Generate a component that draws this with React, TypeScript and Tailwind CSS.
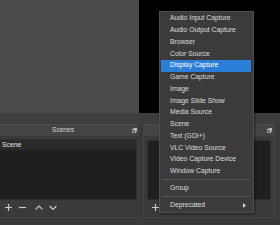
import React from 'react';

const ITEMS_TOP = [
  'Audio Input Capture',
  'Audio Output Capture',
  'Browser',
  'Color Source',
  'Display Capture',
  'Game Capture',
  'Image',
  'Image Slide Show',
  'Media Source',
  'Scene',
  'Text (GDI+)',
  'VLC Video Source',
  'Video Capture Device',
  'Window Capture',
];

function FloatIcon() {
  return (
    <svg width="5" height="5" viewBox="0 0 5 5" className="shrink-0">
      <rect x="1.5" y="0" width="3.5" height="3.5" fill="#bdbdbd" />
      <rect x="0" y="1.5" width="3.5" height="3.5" fill="#6a6a6a" stroke="#bdbdbd" strokeWidth="0.8" />
    </svg>
  );
}

function TitleBar({ title }: { title?: string }) {
  return (
    <div className="relative h-[12px] bg-[#444444] border-t border-[#4c4c4c] flex items-center justify-center pr-[13px]">
      {title && <span className="text-[6.6px] leading-none text-[#d8d8d8]">{title}</span>}
      <div className="absolute right-[2px] top-[3px]">
        <FloatIcon />
      </div>
    </div>
  );
}

function Toolbar({ full }: { full: boolean }) {
  const c = '#c9c9c9';
  return (
    <div className="h-[14px] flex items-center pl-[5px]">
      <svg width="7" height="7" viewBox="0 0 7 7">
        <path d="M3.5 0V7M0 3.5H7" stroke={c} strokeWidth="1.2" />
      </svg>
      {full && (
        <>
          <svg width="7" height="7" viewBox="0 0 7 7" className="ml-[7px]">
            <path d="M0 3.5H7" stroke={c} strokeWidth="1.2" />
          </svg>
          <svg width="8" height="7" viewBox="0 0 8 7" className="ml-[9px]">
            <path d="M0.6 5.4L4 2L7.4 5.4" stroke={c} strokeWidth="1.2" fill="none" />
          </svg>
          <svg width="8" height="7" viewBox="0 0 8 7" className="ml-[6px]">
            <path d="M0.6 2L4 5.4L7.4 2" stroke={c} strokeWidth="1.2" fill="none" />
          </svg>
        </>
      )}
    </div>
  );
}

function MenuItem({ label, active, arrow }: { label: string; active?: boolean; arrow?: boolean }) {
  return (
    <div
      className={`relative h-[11.75px] flex items-center pl-[9px] text-[6.8px] leading-none ${
        active ? 'bg-[#2b7fd8] text-white' : 'text-[#dedede]'
      }`}
    >
      {label}
      {arrow && (
        <svg width="3" height="5" viewBox="0 0 3 5" className="absolute right-[5px] top-[3.5px]">
          <path d="M0 0L3 2.5L0 5Z" fill="#d0d0d0" />
        </svg>
      )}
    </div>
  );
}

export default function App() {
  return (
    <div
      className="relative w-[280px] h-[225px] overflow-hidden bg-[#3a3a3a] select-none"
      style={{ fontFamily: '"Liberation Sans", Arial, sans-serif' }}
    >
      <div className="flex h-[113px]">
        <div className="w-[139px] bg-[#4b4b4b]" />
        <div className="flex-1 bg-black" />
      </div>
      <div className="h-[11px] bg-[#3d3d3d]" />
      <div className="flex gap-[4px]">
        {/* Scenes dock */}
        <div className="w-[139px] flex flex-col">
          <TitleBar title="Scenes" />
          <div className="pt-[3px] pr-[2px] pb-[3px] border-b border-[#454545]">
            <div className="h-[61px] bg-[#1f1f1f] border border-[#2f2f2f] border-l-0 flex flex-col">
              <div className="h-[10px] bg-[#2a2a2a] flex items-center pl-[2px] text-[6.8px] leading-none text-[#e4e4e4]">
                Scene
              </div>
            </div>
            <Toolbar full />
          </div>
        </div>
        {/* Sources dock, title hidden under the menu */}
        <div className="w-[132px] flex flex-col border-l border-r border-[#444444]">
          <TitleBar />
          <div className="pt-[4px] px-[3px] pb-[3px] border-b border-[#454545]">
            <div className="h-[60px] bg-[#1f1f1f] border border-[#2f2f2f]" />
            <Toolbar full={false} />
          </div>
        </div>
      </div>

      {/* Context menu */}
      <div className="absolute left-[159px] top-[11px] w-[95px] bg-[#3b3b3b] border border-[#4e4e4e] py-[1px] pl-[1px] pr-[2px] shadow-[1px_1px_2px_rgba(0,0,0,0.5)]">
        {ITEMS_TOP.map((it) => (
          <MenuItem key={it} label={it} active={it === 'Display Capture'} />
        ))}
        <div className="h-px bg-[#535353] mt-[1px] mb-[2.8px] mx-[1px]" />
        <MenuItem label="Group" />
        <div className="h-px bg-[#535353] mt-[2px] mb-[2px] mx-[1px]" />
        <MenuItem label="Deprecated" arrow />
      </div>
    </div>
  );
}
